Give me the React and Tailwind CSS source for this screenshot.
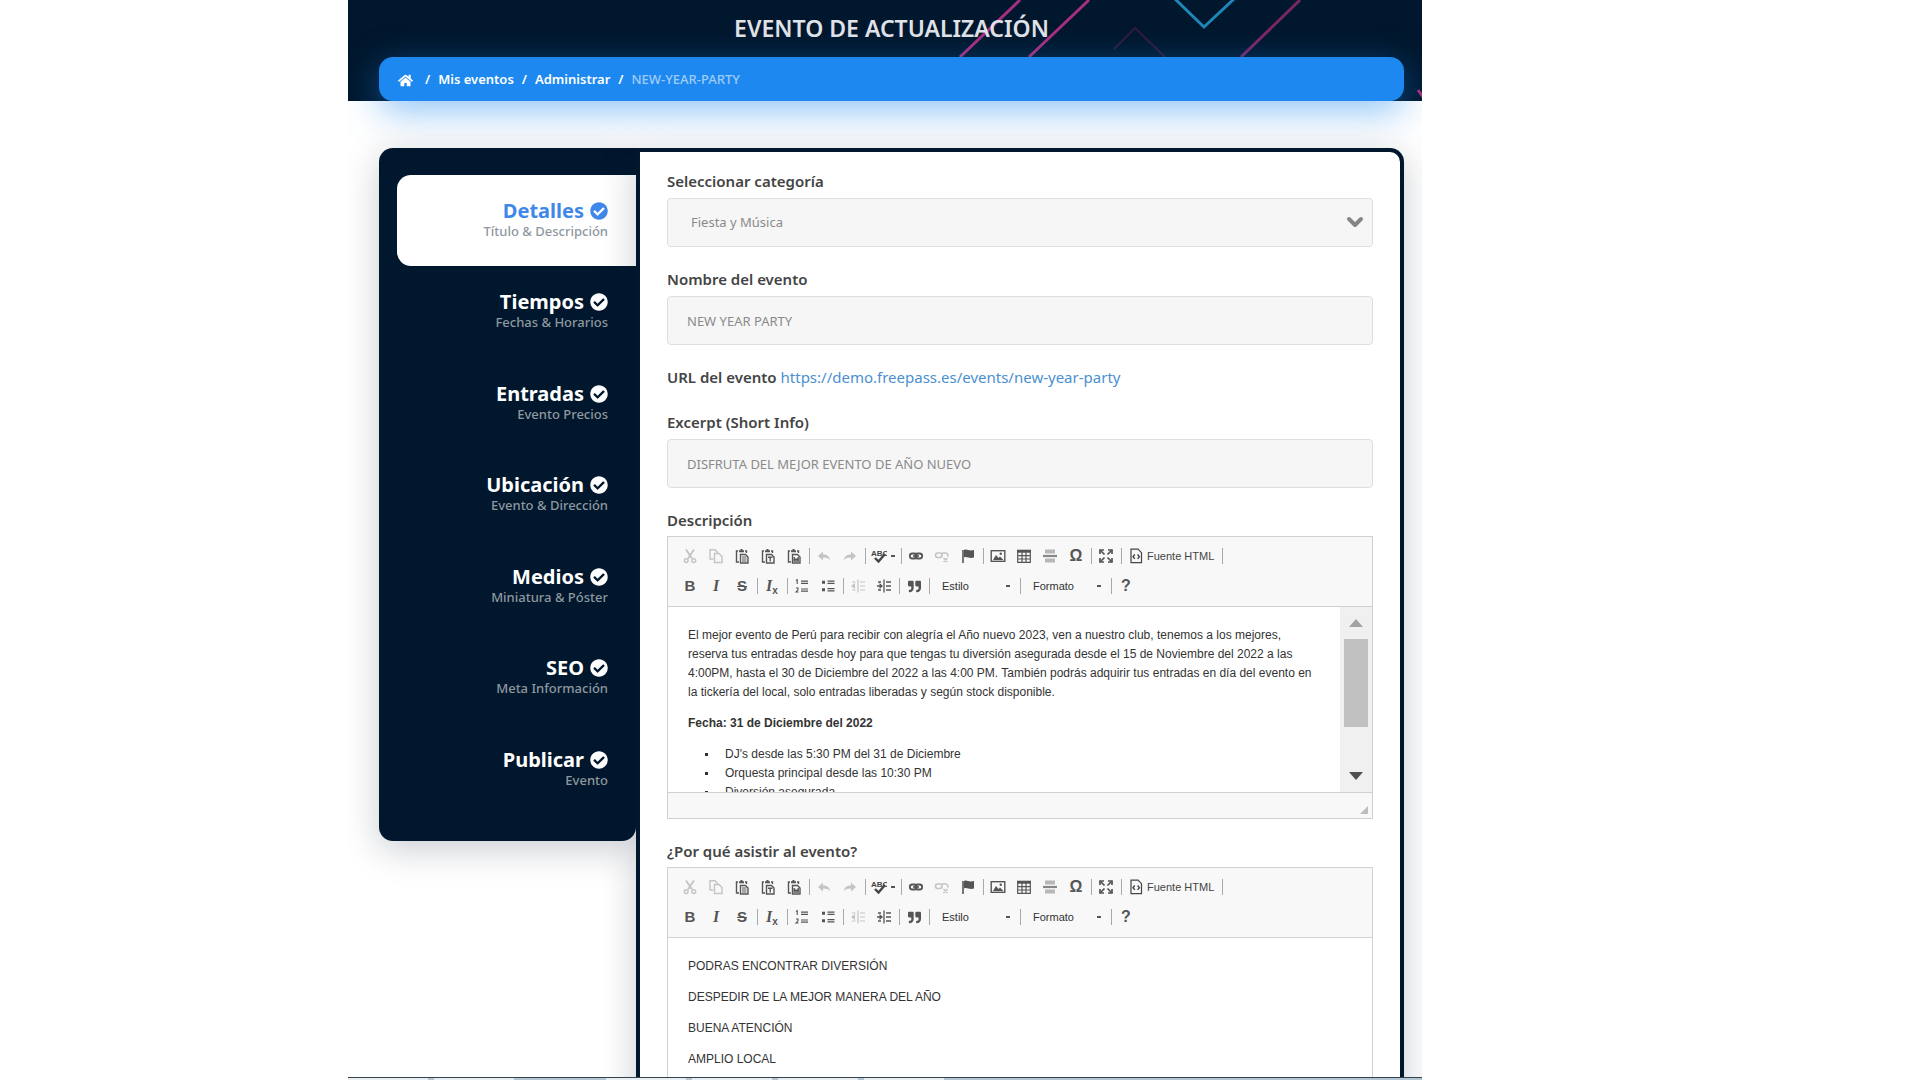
import React, { useState } from "react";
import { FaHome, FaCheckCircle, FaQuoteRight } from "react-icons/fa";
import { ChevronDown } from "lucide-react";

// ================= DATA =================

const steps = [
  { title: "Detalles", subtitle: "Título & Descripción" },
  { title: "Tiempos", subtitle: "Fechas & Horarios" },
  { title: "Entradas", subtitle: "Evento Precios" },
  { title: "Ubicación", subtitle: "Evento & Dirección" },
  { title: "Medios", subtitle: "Miniatura & Póster" },
  { title: "SEO", subtitle: "Meta Información" },
  { title: "Publicar", subtitle: "Evento" },
];

const program = [
  "DJ's desde las 5:30 PM del 31 de Diciembre",
  "Orquesta principal desde las 10:30 PM",
  "Diversión asegurada",
];

// ================= TOOLBAR ICONS =================

const Svg = ({ children }) => (
  <svg
    viewBox="0 0 16 16"
    className="size-4"
    fill="none"
    stroke="currentColor"
    strokeWidth="1.4"
    aria-hidden="true"
  >
    {children}
  </svg>
);

const CutIcon = () => (
  <Svg>
    <path d="M4 1.5l6 9M12 1.5l-6 9" strokeWidth="1.8" />
    <circle cx="4.2" cy="12.6" r="1.9" />
    <circle cx="11.8" cy="12.6" r="1.9" />
  </Svg>
);

const CopyIcon = () => (
  <Svg>
    <path d="M5.5 11H2V1.7h5l2.5 2.5V5" />
    <path d="M6.5 5.5h4.5l3 3v6H6.5z" />
  </Svg>
);

const PasteIcon = ({ kind }) => (
  <Svg>
    <path d="M5 14H2.5V3H4M11 3h1.5v2" />
    <path d="M5 3.2h5M7.5 1v2" strokeWidth="2" />
    <path d="M6.5 6.5h5L14 9v6H6.5z" />
    {kind === "plain" && <path d="M8 9h4.5M8 11h4.5M8 13h4.5" strokeWidth="1.2" />}
    {kind === "text" && <path d="M8 9.2h4.5M10.2 9v4.5" />}
    {kind === "word" && <path d="M8.2 9v4h4V9M8.2 11.2h4" />}
  </Svg>
);

const UndoIcon = () => (
  <Svg>
    <path d="M2 8l5-4.500v3c4 0 6.500 1.500 7 5.500-1.500-2-3.500-2.700-7-2.600v3z" fill="currentColor" stroke="none" />
  </Svg>
);

const RedoIcon = () => (
  <Svg>
    <path d="M14 8L9 3.500v3c-4 0-6.500 1.500-7 5.500 1.500-2 3.500-2.700 7-2.600v3z" fill="currentColor" stroke="none" />
  </Svg>
);

const SpellIcon = () => (
  <Svg>
    <text x="0" y="8" fontSize="8" fontWeight="700" fontFamily="Liberation Sans, sans-serif" fill="currentColor" stroke="none">
      ABC
    </text>
    <path d="M4 10l3.5 3.5L14 6" strokeWidth="2.4" />
  </Svg>
);

const LinkIcon = () => (
  <Svg>
    <rect x="1.8" y="5.5" width="7" height="5" rx="2.5" strokeWidth="1.8" />
    <rect x="7.2" y="5.5" width="7" height="5" rx="2.5" strokeWidth="1.8" />
    <path d="M5 8h6" strokeWidth="1.6" />
  </Svg>
);

const UnlinkIcon = () => (
  <Svg>
    <rect x="1.5" y="5" width="6.5" height="4.5" rx="2.2" strokeWidth="1.6" />
    <path d="M8 5h3.500a2.200 2.200 0 012 3.500M9.500 10l4 4M13.500 10l-4 4" strokeWidth="1.6" />
  </Svg>
);

const FlagIcon = () => (
  <Svg>
    <path d="M3 2v13" strokeWidth="1.6" />
    <path d="M4 2c3-1.500 4.500 1.500 10 0v7.500c-5 1.500-7-1.500-10 0z" fill="currentColor" stroke="none" />
  </Svg>
);

const ImageIcon = () => (
  <Svg>
    <rect x="1.2" y="2.7" width="13.6" height="10.6" />
    <path d="M3 12l3-5 2.500 3 1.500-1.500 3.500 3.500z" fill="currentColor" stroke="none" />
    <circle cx="10.8" cy="5.8" r="1.2" fill="currentColor" stroke="none" />
  </Svg>
);

const TableIcon = () => (
  <Svg>
    <path d="M1 3.2h14" strokeWidth="3" />
    <path d="M1.7 2v12.300h12.600V2M1.700 7.700h12.600M1.700 11h12.600M6 4v10M10 4v10" strokeWidth="1.2" />
  </Svg>
);

const RuleIcon = () => (
  <Svg>
    <path d="M3 1.5h10v4H3zM3 10.5h10v4H3z" fill="currentColor" stroke="none" opacity="0.4" />
    <path d="M1 8h14" strokeWidth="2.2" opacity="0.7" />
  </Svg>
);

const MaximizeIcon = () => (
  <Svg>
    <path d="M2 6V2h4M10 2h4v4M14 10v4h-4M6 14H2v-4" strokeWidth="1.7" />
    <path d="M2 2l4.500 4.500M14 2L9.500 6.500M14 14L9.500 9.500M2 14l4.500-4.500" strokeWidth="1.7" />
  </Svg>
);

const SourceIcon = () => (
  <Svg>
    <path d="M3 1.2h7l3.500 3.500v10H3z" strokeWidth="1.2" />
    <path d="M6.8 6.500L5 8.700l1.800 2.200M9.600 6.500l1.800 2.200-1.800 2.200" />
  </Svg>
);

const OrderedIcon = () => (
  <Svg>
    <path d="M2 2.5l1.200-.8V6M2 10h2v1.800L2 14h2.500" strokeWidth="1.1" />
    <path d="M7 3.2h7M7 5.400h7M7 11h7M7 13.200h7" strokeWidth="1.2" />
  </Svg>
);

const BulletIcon = () => (
  <Svg>
    <path d="M2 2.7h3v3H2zM2 10.300h3v3H2z" fill="currentColor" stroke="none" />
    <path d="M7.5 3.2h7M7.500 5.400h7M7.500 10.700h7M7.500 12.900h7" strokeWidth="1.2" />
  </Svg>
);

const OutdentIcon = () => (
  <Svg>
    <path d="M8 1.5v13M10 4h5M10 8h5M10 12h5M5.500 4H2M5.500 12H2" strokeWidth="1.2" />
    <path d="M1 8l4-3v6z" fill="currentColor" stroke="none" />
  </Svg>
);

const IndentIcon = () => (
  <Svg>
    <path d="M8 1.5v13M10 4h5M10 8h5M10 12h5M1 8h4M5 4H2M5 12H2" strokeWidth="1.3" />
    <path d="M7 8L3.500 5v6z" fill="currentColor" stroke="none" />
  </Svg>
);

// ================= TOOLBAR =================

const Tool = ({ label, muted, children }) => (
  <button
    type="button"
    aria-label={label}
    className={
      muted
        ? "flex h-5 w-[26px] items-center justify-center text-[#c4c4c4]"
        : "flex h-5 w-[26px] items-center justify-center text-[#555555]"
    }
  >
    {children}
  </button>
);

const Separator = () => (
  <span className="flex w-1 justify-center">
    <span className="h-4 w-px bg-[#a8a8a8]" />
  </span>
);

const Combo = ({ label }) => (
  <button
    type="button"
    className="flex h-5 w-[87px] items-center justify-between pr-2 pl-[11px] font-['Liberation_Sans',sans-serif] text-[11px] text-[#333333]"
  >
    {label}
    <span className="h-[2px] w-1 bg-[#555555]" />
  </button>
);

const Toolbar = () => (
  <div className="flex h-[70px] flex-col gap-[10px] border-b border-[#d1d1d1] bg-[#f8f8f8] px-[9px] pt-[9px]">
    <div className="flex items-center">
      <Tool label="Cortar" muted><CutIcon /></Tool>
      <Tool label="Copiar" muted><CopyIcon /></Tool>
      <Tool label="Pegar"><PasteIcon kind="plain" /></Tool>
      <Tool label="Pegar como texto plano"><PasteIcon kind="text" /></Tool>
      <Tool label="Pegar desde Word"><PasteIcon kind="word" /></Tool>
      <Separator />
      <Tool label="Deshacer" muted><UndoIcon /></Tool>
      <Tool label="Rehacer" muted><RedoIcon /></Tool>
      <Separator />
      <button
        type="button"
        aria-label="Corrector ortográfico"
        className="flex h-5 w-8 items-center gap-1 pl-1 text-[#444444]"
      >
        <SpellIcon />
        <span className="h-[2px] w-1 bg-[#555555]" />
      </button>
      <Separator />
      <Tool label="Insertar vínculo"><LinkIcon /></Tool>
      <Tool label="Eliminar vínculo" muted><UnlinkIcon /></Tool>
      <Tool label="Ancla"><FlagIcon /></Tool>
      <Separator />
      <Tool label="Imagen"><ImageIcon /></Tool>
      <Tool label="Tabla"><TableIcon /></Tool>
      <Tool label="Línea horizontal"><RuleIcon /></Tool>
      <Tool label="Carácter especial">
        <span className="font-['Liberation_Sans',sans-serif] text-base font-bold leading-5">Ω</span>
      </Tool>
      <Separator />
      <Tool label="Maximizar"><MaximizeIcon /></Tool>
      <Separator />
      <button
        type="button"
        className="flex h-5 w-[97px] items-center gap-[3px] pl-[5px] font-['Liberation_Sans',sans-serif] text-[11px] whitespace-nowrap text-[#444444]"
      >
        <SourceIcon />
        Fuente HTML
      </button>
      <Separator />
    </div>

    <div className="flex items-center font-['Liberation_Sans',sans-serif]">
      <Tool label="Negrita"><span className="text-[15px] font-bold leading-5">B</span></Tool>
      <Tool label="Cursiva">
        <span className="font-['Liberation_Serif',serif] text-base font-bold italic leading-5">I</span>
      </Tool>
      <Tool label="Tachado"><span className="text-[15px] font-bold leading-5 line-through">S</span></Tool>
      <Separator />
      <Tool label="Eliminar formato">
        <span className="font-['Liberation_Serif',serif] text-base font-bold italic leading-5">
          I<sub className="font-['Liberation_Sans',sans-serif] text-[10px] not-italic">x</sub>
        </span>
      </Tool>
      <Separator />
      <Tool label="Lista numerada"><OrderedIcon /></Tool>
      <Tool label="Lista con viñetas"><BulletIcon /></Tool>
      <Separator />
      <Tool label="Disminuir sangría" muted><OutdentIcon /></Tool>
      <Tool label="Aumentar sangría"><IndentIcon /></Tool>
      <Separator />
      <Tool label="Cita"><FaQuoteRight className="size-[13px]" /></Tool>
      <Separator />
      <Combo label="Estilo" />
      <Separator />
      <Combo label="Formato" />
      <Separator />
      <Tool label="Acerca de"><span className="text-base font-bold leading-5">?</span></Tool>
    </div>
  </div>
);

// ================= EDITOR =================

const ScrollRail = () => (
  <div className="flex w-8 shrink-0 flex-col items-center bg-[#f0f0f0] py-3" aria-hidden="true">
    <svg viewBox="0 0 14 8" className="h-2 w-[14px] fill-[#a3a3a3]"><path d="M0 8l7-8 7 8z" /></svg>
    <div className="mt-3 h-[88px] w-6 bg-[#c1c1c1]" />
    <svg viewBox="0 0 14 8" className="mt-auto h-2 w-[14px] fill-[#505050]"><path d="M0 0l7 8 7-8z" /></svg>
  </div>
);

const Editor = ({ label, id, scroll, children }) => (
  <div className="mb-5">
    <span id={id} className="mb-1 block text-[15px] leading-6 font-semibold text-[#444444]">
      {label}
    </span>
    <div className="border border-[#d1d1d1]">
      <Toolbar />
      <div className="flex h-[185px]">
        <div
          role="textbox"
          aria-multiline="true"
          aria-labelledby={id}
          className="flex-1 space-y-3 overflow-hidden px-5 pt-[19px] font-['Liberation_Sans',sans-serif] text-xs leading-[19px] text-[#333333]"
        >
          {children}
        </div>
        {scroll && <ScrollRail />}
      </div>
      <div className="flex h-[26px] items-end justify-end border-t border-[#d1d1d1] bg-[#f8f8f8] p-1">
        <svg viewBox="0 0 8 8" className="size-2 fill-[#bcbcbc]" aria-hidden="true"><path d="M8 0v8H0z" /></svg>
      </div>
    </div>
  </div>
);

// ================= FIELDS =================

const Input = ({ id, label, value, onChange }) => (
  <div className="mb-5">
    <label htmlFor={id} className="mb-[5px] block text-[15px] leading-6 font-semibold text-[#444444]">
      {label}
    </label>
    <input
      id={id}
      type="text"
      value={value}
      onChange={(e) => onChange(e.target.value)}
      className="h-[49px] w-full rounded-sm border border-[#dedede] bg-[#f6f6f6] px-[19px] text-[13px] text-[#8a8a8a] focus:outline-none"
    />
  </div>
);

const HeaderLines = () => (
  <svg
    viewBox="0 0 500 101"
    className="absolute top-0 right-0 h-[101px] w-[500px]"
    fill="none"
    strokeWidth="3"
    aria-hidden="true"
  >
    <path d="M98 0L38 57M167 0L107 57" stroke="#a62f80" />
    <path d="M378 0L319 57" stroke="#7a2768" />
    <path d="M253 -1L282 27L312 -1" stroke="#1f87b8" />
    <path d="M192 49L213 28L244 58" stroke="#321a3d" strokeWidth="2" />
    <path d="M496 90L501 97" stroke="#a62f80" />
  </svg>
);

// ================= PAGE =================

export default function App() {
  const [active, setActive] = useState("Detalles");
  const [name, setName] = useState("NEW YEAR PARTY");
  const [excerpt, setExcerpt] = useState("DISFRUTA DEL MEJOR EVENTO DE AÑO NUEVO");

  return (
    <div className="h-screen overflow-hidden bg-white pr-[498px] pl-[348px] font-['Noto_Sans',sans-serif]">
      <div className="flex h-full flex-col overflow-hidden">
        <header className="relative shrink-0 bg-[#00172d] pr-[18px] pl-[31px]">
          <HeaderLines />
          <h1 className="relative pt-3 pb-[13px] text-center text-[23px] leading-8 font-semibold text-[#e0e3e8]">
            EVENTO DE ACTUALIZACIÓN
          </h1>
          <nav
            aria-label="Ruta"
            className="relative flex h-11 items-center gap-2 rounded-[14px] bg-[#1d89f0] px-[19px] pt-0.5 text-[13px] font-semibold text-white shadow-[0_10px_36px_rgba(29,137,240,0.5)]"
          >
            <a href="#inicio" aria-label="Inicio" className="mr-1"><FaHome className="size-[15px]" /></a>
            <span>/</span>
            <a href="#eventos">Mis eventos</a>
            <span>/</span>
            <a href="#administrar">Administrar</a>
            <span>/</span>
            <span className="font-medium text-[#9fcbf8]">NEW-YEAR-PARTY</span>
          </nav>
        </header>

        <main className="flex min-h-0 flex-1 items-start overflow-hidden pt-[47px] pr-[18px] pl-[31px]">
          {/* Steps */}
          <aside className="w-[257px] shrink-0 rounded-l-[14px] rounded-br-[14px] bg-[#00172d] pt-[27px] pb-[26px] pl-[18px] shadow-[0_8px_36px_rgba(0,23,45,0.22)]">
            <ul className="grid h-[640px] grid-rows-7">
              {steps.map((step) => (
                <li key={step.title}>
                  <button
                    type="button"
                    onClick={() => setActive(step.title)}
                    className={
                      active === step.title
                        ? "flex h-full w-full flex-col items-end rounded-l-[14px] bg-white pt-6 pr-7 text-[#3f87e8]"
                        : "flex h-full w-full flex-col items-end pt-6 pr-7 text-white"
                    }
                  >
                    <span className="flex items-center gap-1.5 text-xl leading-6 font-bold">
                      {step.title}
                      <FaCheckCircle className="size-[18px]" />
                    </span>
                    <span className="text-[13px] leading-4 font-medium text-[#8f979f]">{step.subtitle}</span>
                  </button>
                </li>
              ))}
            </ul>
          </aside>

          {/* Form */}
          <section className="relative min-w-0 flex-1 rounded-tr-[14px] border-4 border-b-0 border-[#00172d] bg-white px-[27px] pt-[17px] shadow-[0_8px_36px_rgba(0,23,45,0.22)]">
            <form>
              <div className="mb-5">
                <label htmlFor="category" className="mb-[5px] block text-[15px] leading-6 font-semibold text-[#444444]">
                  Seleccionar categoría
                </label>
                <div className="relative">
                  <select
                    id="category"
                    className="h-[49px] w-full appearance-none rounded-sm border border-[#dedede] bg-[#f6f6f6] px-[23px] text-[13px] text-[#8a8a8a] focus:outline-none"
                  >
                    <option>Fiesta y Música</option>
                  </select>
                  <ChevronDown
                    strokeWidth={4}
                    className="pointer-events-none absolute top-3 right-1.5 size-6 text-[#858585]"
                  />
                </div>
              </div>

              <Input id="name" label="Nombre del evento" value={name} onChange={setName} />

              <p className="mb-[21px] text-[15px] leading-6 font-semibold text-[#444444]">
                URL del evento{" "}
                <a href="#new-year-party" className="font-normal text-[#4a90d0]">
                  https://demo.freepass.es/events/new-year-party
                </a>
              </p>

              <Input id="excerpt" label="Excerpt (Short Info)" value={excerpt} onChange={setExcerpt} />

              <Editor id="description" label="Descripción" scroll>
                <p>
                  El mejor evento de Perú para recibir con alegría el Año nuevo 2023, ven a nuestro club, tenemos a los
                  mejores, reserva tus entradas desde hoy para que tengas tu diversión asegurada desde el 15 de Noviembre
                  del 2022 a las 4:00PM, hasta el 30 de Diciembre del 2022 a las 4:00 PM. También podrás adquirir tus
                  entradas en día del evento en la tickería del local, solo entradas liberadas y según stock disponible.
                </p>
                <p className="font-bold">Fecha: 31 de Diciembre del 2022</p>
                <ul className="pl-[17px]">
                  {program.map((item) => (
                    <li key={item} className="flex items-center gap-[17px]">
                      <span className="size-[3px] bg-[#333333]" />
                      {item}
                    </li>
                  ))}
                </ul>
              </Editor>

              <Editor id="reasons" label="¿Por qué asistir al evento?">
                <p>PODRAS ENCONTRAR DIVERSIÓN</p>
                <p>DESPEDIR DE LA MEJOR MANERA DEL AÑO</p>
                <p>BUENA ATENCIÓN</p>
                <p>AMPLIO LOCAL</p>
              </Editor>
            </form>
          </section>
        </main>

        {/* Bottom strip */}
        <div className="flex h-[3px] shrink-0 gap-1.5 border-t border-[#33444f] bg-[#b4c6d2]">
          <span className="w-20 bg-[#e8eef2]" />
          <span className="mr-[86px] w-20 bg-[#e8eef2]" />
          <span className="w-20 bg-[#e8eef2]" />
          <span className="w-20 bg-[#e8eef2]" />
          <span className="w-20 bg-[#e8eef2]" />
          <span className="w-20 bg-[#e8eef2]" />
        </div>
      </div>
    </div>
  );
}
